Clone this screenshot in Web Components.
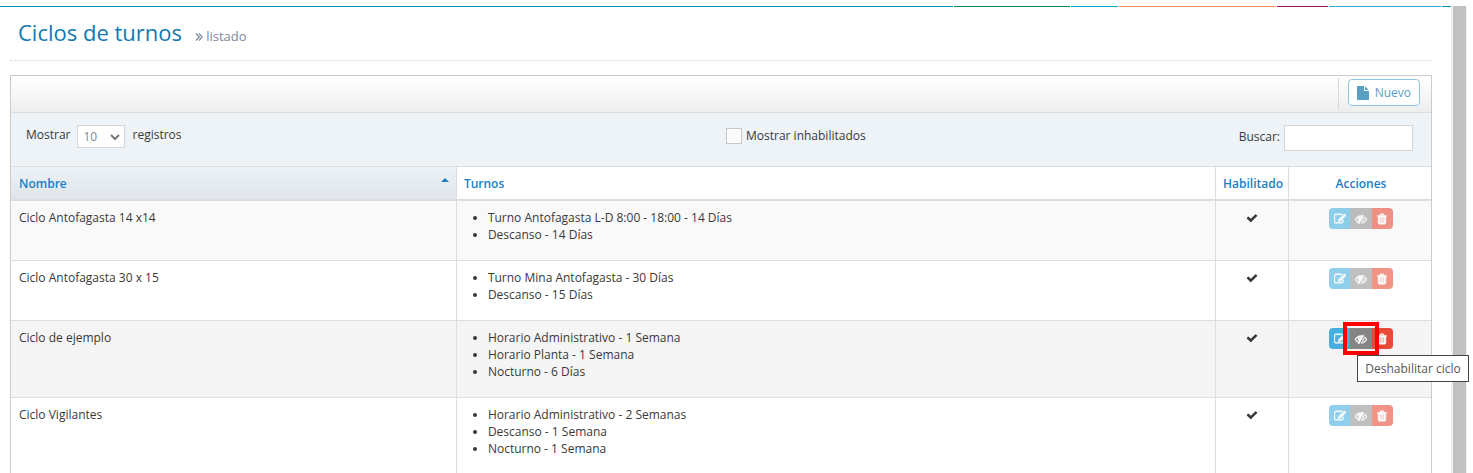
<!DOCTYPE html>
<html lang="es">
<head>
<meta charset="utf-8">
<title>Ciclos de turnos</title>
<style>
  html, body { margin: 0; height: 100%; }
  body {
    background: #fff;
    color: #393939;
    font: 12px/17px "Open Sans", "Noto Sans", sans-serif;
    overflow: hidden;
  }
</style>
</head>
<body>
<turnos-page>
  <page-title>Ciclos de turnos<span slot="section">listado</span></page-title>
  <list-panel>
    <new-button slot="toolbar">Nuevo</new-button>
    <list-filters slot="filters"></list-filters>
    <ciclos-table></ciclos-table>
  </list-panel>
</turnos-page>

<script>
const ICONS = {
  check: "M1671 566q0 40-28 68l-724 724-136 136q-28 28-68 28t-68-28l-136-136-362-362q-28-28-28-68t28-68l136-136q28-28 68-28t68 28l294 295 656-657q28-28 68-28t68 28l136 136q28 28 28 68z",
  file: "M1152 512v-472q22 14 36 28l408 408q14 14 28 36h-472zm-128 32q0 40 28 68t68 28h544v1056q0 40-28 68t-68 28h-1344q-40 0-68-28t-28-68v-1600q0-40 28-68t68-28h800v544z",
  edit: "M888 1184l116-116-152-152-116 116v56h96v96h56zm440-720q-16-16-33 1l-350 350q-17 17-1 33t33-1l350-350q17-17 1-33zm80 594v190q0 119-84.5 203.5t-203.5 84.5h-832q-119 0-203.5-84.5t-84.5-203.5v-832q0-119 84.5-203.5t203.5-84.5h832q63 0 117 25 15 7 18 23 3 17-9 29l-49 49q-14 14-32 8-23-6-45-6h-832q-66 0-113 47t-47 113v832q0 66 47 113t113 47h832q66 0 113-47t47-113v-126q0-13 9-22l64-64q15-15 35-7t20 29zm-96-738l288 288-672 672h-288v-288zm444 132l-92 92-288-288 92-92q28-28 68-28t68 28l152 152q28 28 28 68t-28 68z",
  hide: "M555 1335l78-141q-87-63-136-159t-49-203q0-121 61-225-229 117-381 353 167 258 427 375zm389-759q0-20-14-34t-34-14q-125 0-214.5 89.5t-89.5 214.5q0 20 14 34t34 14 34-14 14-34q0-86 61-147t147-61q20 0 34-14t14-34zm363-191q0 7-1 9-106 189-316 567t-315 566l-49 89q-10 16-28 16-12 0-134-70-16-10-16-28 0-12 44-87-143-65-263.5-173t-208.5-245q-20-31-20-69t20-69q153-235 380-371t496-136q89 0 180 17l54-97q10-16 28-16 5 0 18 6t31 15.5 33 18.5 31.5 18.5 19.5 11.5q16 10 16 27zm37 447q0 139-79 253.5t-209 164.5l280-502q8 45 8 84zm448 128q0 35-20 69-39 64-109 145-150 172-347.5 267t-419.5 95l74-132q212-18 392.5-137t301.5-307q-115-179-282-294l63-112q95 64 182.5 153t144.5 184q20 34 20 69z",
  trash: "M704 1376v-704q0-14-9-23t-23-9h-64q-14 0-23 9t-9 23v704q0 14 9 23t23 9h64q14 0 23-9t9-23zm256 0v-704q0-14-9-23t-23-9h-64q-14 0-23 9t-9 23v704q0 14 9 23t23 9h64q14 0 23-9t9-23zm256 0v-704q0-14-9-23t-23-9h-64q-14 0-23 9t-9 23v704q0 14 9 23t23 9h64q14 0 23-9t9-23zm-544-992h448l-48-117q-7-9-17-11h-317q-10 2-17 11zm928 32v64q0 14-9 23t-23 9h-96v948q0 83-47 143.5t-113 60.5h-832q-66 0-113-58.5t-47-141.5v-952h-96q-14 0-23-9t-9-23v-64q0-14 9-23t23-9h309l70-167q15-37 54-63t79-26h320q40 0 79 26t54 63l70 167h309q14 0 23 9t9 23z"
};

const CICLOS = [
  { nombre: "Ciclo Antofagasta 14 x14", turnos: ["Turno Antofagasta L-D 8:00 - 18:00 - 14 Días", "Descanso - 14 Días"] },
  { nombre: "Ciclo Antofagasta 30 x 15", turnos: ["Turno Mina Antofagasta - 30 Días", "Descanso - 15 Días"] },
  { nombre: "Ciclo de ejemplo", turnos: ["Horario Administrativo - 1 Semana", "Horario Planta - 1 Semana", "Nocturno - 6 Días"], active: true },
  { nombre: "Ciclo Vigilantes", turnos: ["Horario Administrativo - 2 Semanas", "Descanso - 1 Semana", "Nocturno - 1 Semana"] }
];

class FaIcon extends HTMLElement {
  constructor() {
    super();
    this.attachShadow({ mode: "open" }).innerHTML = `
      <style>
        :host { display: inline-block; width: 12px; height: 12px; }
        svg { display: block; width: 100%; height: 100%; fill: currentColor; stroke: currentColor; stroke-width: var(--icon-weight, 0); }
      </style>
      <svg viewBox="0 0 1792 1792" aria-hidden="true"><path d="${ICONS[this.getAttribute("name")]}"/></svg>
    `;
  }
}

class TurnosPage extends HTMLElement {
  constructor() {
    super();
    this.attachShadow({ mode: "open" }).innerHTML = `
      <style>
        :host { display: flex; height: 100vh; box-sizing: border-box; padding: 6px 6px 0 0; overflow: hidden; }
        .view { flex: 1; min-width: 0; }
        .strip { display: flex; gap: 1px; height: 1px; }
        .strip i { background: var(--c); flex: var(--w) 1 0; }
        main { padding: 0 19px 0 10px; }
        .scroll { width: 16px; box-sizing: border-box; padding: 0 1px 0 2px; background: #f1f1f1; }
        .scroll div { height: 100%; background: #c1c1c1; }
      </style>
      <div class="view">
        <div class="strip">
          <i style="--c:#0093b2; --w:952"></i>
          <i style="--c:#008a5e; --w:116"></i>
          <i style="--c:#00a9ce; --w:47"></i>
          <i style="--c:#ff8f5a; --w:157"></i>
          <i style="--c:#93115a; --w:51"></i>
          <i style="--c:#2fa4cc; --w:112"></i>
          <i style="--c:#0093b2; --w:9"></i>
        </div>
        <main><slot></slot></main>
      </div>
      <div class="scroll"><div></div></div>
    `;
  }
}

class PageTitle extends HTMLElement {
  constructor() {
    super();
    this.attachShadow({ mode: "open" }).innerHTML = `
      <style>
        :host { display: block; border-bottom: 1px dotted #d5d5d5; padding: 11px 8px 10px; margin-bottom: 14px; }
        h1 { margin: 0; color: #1478b0; font-size: 22px; line-height: 28px; font-weight: 400; }
        small { color: #7f8a9a; font-size: 13px; margin-left: 7px; }
        svg { width: 8px; height: 8px; fill: none; stroke: currentColor; stroke-width: 1.3; }
      </style>
      <h1><slot></slot>
        <small><svg viewBox="0 0 8 8" aria-hidden="true"><path d="M1 .5 4.200 4 1 7.500M4 .5 7.200 4 4 7.500"/></svg>
        <slot name="section"></slot></small>
      </h1>
    `;
  }
}

class ListPanel extends HTMLElement {
  constructor() {
    super();
    this.attachShadow({ mode: "open" }).innerHTML = `
      <style>
        :host { display: block; border: 1px solid #ccc; }
        .toolbar {
          display: flex; justify-content: flex-end;
          height: 36px; padding: 0 11px 0 0;
          background: linear-gradient(#fff, #eee);
          border-bottom: 1px solid #ddd;
        }
      </style>
      <div class="toolbar"><slot name="toolbar"></slot></div>
      <slot name="filters"></slot>
      <slot></slot>
    `;
  }
}

class NewButton extends HTMLElement {
  constructor() {
    super();
    this.attachShadow({ mode: "open" }).innerHTML = `
      <style>
        :host { display: block; border-left: 1px solid #d9d9d9; margin: 2px 0; padding: 1px 0 0 9px; }
        button {
          display: flex; align-items: center; gap: 5px;
          height: 27px; padding: 0 8px 0 7px;
          font: inherit; color: #5a9fc4;
          background: #fff; border: 1px solid #8cc5dd; border-radius: 4px;
        }
        fa-icon { width: 14px; height: 14px; }
      </style>
      <button type="button"><fa-icon name="file"></fa-icon><slot></slot></button>
    `;
  }
}

class ListFilters extends HTMLElement {
  constructor() {
    super();
    this.attachShadow({ mode: "open" }).innerHTML = `
      <style>
        :host {
          display: grid; grid-template-columns: 1fr 1fr; align-items: start;
          padding: 12px 0 15px; background: #edf3f7;
        }
        .length { padding-left: 15px; display: flex; align-items: flex-start; gap: 7px; }
        .length label, .length > span { line-height: 20px; }
        .select { display: grid; align-items: center; }
        .select > * { grid-area: 1 / 1; }
        select {
          appearance: none; width: 48px; height: 23px; padding: 0 5px;
          font: inherit; color: #858585; background: #fff;
          border: 1px solid #d5d5d5; border-radius: 0;
        }
        .select svg {
          justify-self: end; margin-right: 5px; width: 10px; height: 6px;
          fill: none; stroke: #777; stroke-width: 2; pointer-events: none;
        }
        .right { display: flex; justify-content: space-between; padding: 0 18px 0 5px; }
        .check { display: flex; align-items: center; gap: 4px; height: 20px; }
        .check input {
          appearance: none; width: 16px; height: 16px; margin: 2px 0 0;
          background: #fafafa; border: 1px solid #c8c8c8;
        }
        .search { display: flex; align-items: flex-start; gap: 4px; }
        .search label { line-height: 24px; }
        .search input {
          box-sizing: border-box; width: 129px; height: 26px; padding: 4px;
          font: inherit; background: #fff; border: 1px solid #d5d5d5;
        }
      </style>
      <div class="length">
        <label for="length">Mostrar</label>
        <span class="select">
          <select id="length"><option>10</option><option>25</option><option>50</option></select>
          <svg viewBox="0 0 10 6" aria-hidden="true"><path d="M1 1l4 4 4-4"/></svg>
        </span>
        <span>registros</span>
      </div>
      <div class="right">
        <div class="check">
          <input type="checkbox" id="disabled"><label for="disabled">Mostrar inhabilitados</label>
        </div>
        <div class="search">
          <label for="search">Buscar:</label><input type="search" id="search">
        </div>
      </div>
    `;
  }
}

class RowActions extends HTMLElement {
  constructor() {
    super();
    const active = this.hasAttribute("active");
    this.attachShadow({ mode: "open" }).innerHTML = `
      <style>
        :host { display: inline-flex; width: 64px; height: 21px; vertical-align: top; --icon-weight: 70; }
        button {
          flex: 1; display: flex; align-items: center; justify-content: center;
          padding: 0; border: 0; color: #fff; background: var(--bg);
          position: relative; font: inherit; opacity: .6;
        }
        :host([active]) button { opacity: 1; }
        .edit { --bg: #45b0e0; border-radius: 4px 0 0 4px; }
        .hide { --bg: #959595; }
        :host([active]) .hide { --bg: #858585; z-index: 1; }
        .trash { --bg: #e84c38; border-radius: 0 4px 4px 0; }
        .ring { position: absolute; inset: -6px -7px; border: 4px solid #f00; }
        .tip {
          position: absolute; top: 27px; left: 7px;
          padding: 4px 7px; border: 1px solid #444;
          background: #fff; color: #575757; white-space: nowrap;
        }
      </style>
      <button type="button" class="edit" aria-label="Editar ciclo"><fa-icon name="edit"></fa-icon></button>
      <button type="button" class="hide" aria-label="Deshabilitar ciclo"><fa-icon name="hide"></fa-icon>
        ${active ? `<span class="ring"></span><span class="tip" role="tooltip">Deshabilitar ciclo</span>` : ""}
      </button>
      <button type="button" class="trash" aria-label="Eliminar ciclo"><fa-icon name="trash"></fa-icon></button>
    `;
  }
}

class CiclosTable extends HTMLElement {
  constructor() {
    super();
    this.attachShadow({ mode: "open" }).innerHTML = `
      <style>
        :host { display: block; }
        table { width: 100%; table-layout: fixed; border-collapse: separate; border-spacing: 0; border-top: 1px solid #ddd; }
        th, td { box-sizing: border-box; padding: 8px 7px; text-align: left; vertical-align: top; border-right: 1px solid #ddd; border-bottom: 1px solid #ddd; }
        th { color: #1a80c4; font-weight: 600; border-bottom-width: 2px; white-space: nowrap; padding: 8px 7px 7px; }
        th:first-child, td:first-child { padding-left: 8px; }
        th:last-child, td:last-child { border-right: 0; padding-left: 9px; }
        th.sorted { background: linear-gradient(#edf2f6, #e0e5eb); }
        .sorted div { display: flex; justify-content: space-between; }
        .sorted i { width: 0; height: 0; margin-top: 3px; border: 4px solid transparent; border-top: 0; border-bottom-color: #1a80c4; }
        .center { text-align: center; }
        td.center { padding-top: 7px; }
        tbody tr:nth-child(odd) { background: #f9f9f9; }
        tbody tr.active { background: #f5f5f5; }
        ul { margin: 0 0 9px; padding: 0 0 0 24px; }
        td fa-icon { vertical-align: top; margin-top: 4px; }
        .name { width: 31.4%; }
        .enabled { width: 73px; }
        .actions { width: 142px; }
      </style>
      <table>
        <thead>
          <tr>
            <th class="name sorted" aria-sort="ascending"><div>Nombre<i></i></div></th>
            <th>Turnos</th>
            <th class="enabled center">Habilitado</th>
            <th class="actions center">Acciones</th>
          </tr>
        </thead>
        <tbody>
          ${CICLOS.map(c => `
            <tr class="${c.active ? "active" : ""}">
              <td>${c.nombre}</td>
              <td><ul>${c.turnos.map(t => `<li>${t}</li>`).join("")}</ul></td>
              <td class="center"><fa-icon name="check"></fa-icon></td>
              <td class="center"><row-actions ${c.active ? "active" : ""}></row-actions></td>
            </tr>
          `).join("")}
        </tbody>
      </table>
    `;
  }
}

customElements.define("fa-icon", FaIcon);
customElements.define("turnos-page", TurnosPage);
customElements.define("page-title", PageTitle);
customElements.define("list-panel", ListPanel);
customElements.define("new-button", NewButton);
customElements.define("list-filters", ListFilters);
customElements.define("row-actions", RowActions);
customElements.define("ciclos-table", CiclosTable);
</script>
</body>
</html>
